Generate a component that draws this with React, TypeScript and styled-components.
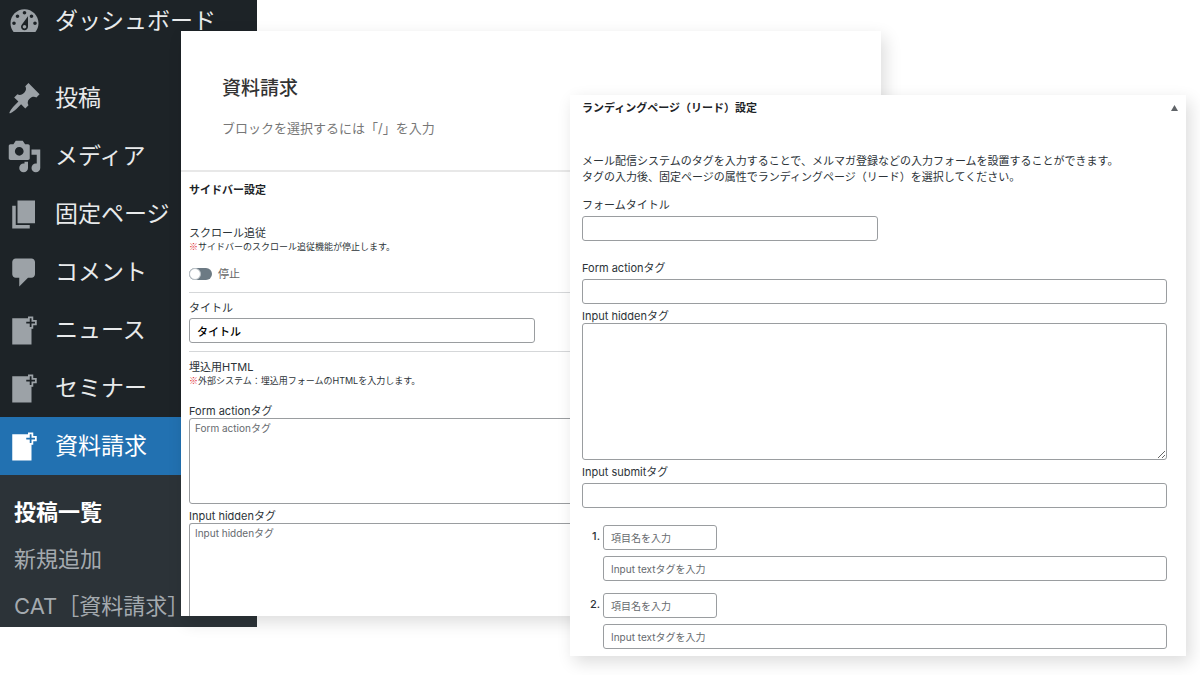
import React from "react";
import styled, { createGlobalStyle, css } from "styled-components";

const GlobalStyle = createGlobalStyle`
  *, *::before, *::after { box-sizing: border-box; }
  body {
    margin: 0;
    background: #fff;
    color: #2c3338;
    font-family: Inter, "Noto Sans CJK JP", sans-serif;
    font-size: 11px;
    line-height: 14px;
  }
  input, textarea, button { font: inherit; color: inherit; }
`;

/* The three panels share one grid row and overlap across its columns. */
const Stage = styled.main`
  display: grid;
  grid-template-columns: 181px 76px minmax(0, 313fr) minmax(0, 311fr) minmax(0, 305fr) 14px;
  align-items: start;
  padding-bottom: 19px;
  overflow: hidden;
`;

const Sidebar = styled.nav`
  grid-area: 1 / 1 / 2 / 3;
  background: #1d2327;
`;

const Menu = styled.ul`
  list-style: none;
  margin: 0;
  padding: 0;
`;

const MenuLink = styled.a<{ $current?: boolean; $first?: boolean }>`
  display: flex;
  align-items: center;
  gap: 13px;
  height: ${(p) => (p.$first ? 42 : 58)}px;
  margin-bottom: ${(p) => (p.$first ? 27 : 0)}px;
  padding-left: 7px;
  background: ${(p) => (p.$current ? "#2271b1" : "transparent")};
  color: ${(p) => (p.$current ? "#fff" : "#e8eaeb")};
  font-size: 23px;
  font-weight: 400;
  line-height: 32px;
  white-space: nowrap;
  text-decoration: none;

  svg {
    flex: none;
    width: 35px;
    height: 35px;
    fill: ${(p) => (p.$current ? "#fff" : "#9ca2a7")};
  }
`;

const Submenu = styled.ul`
  display: flex;
  flex-direction: column;
  gap: 9px;
  list-style: none;
  margin: 0;
  padding: 18px 0 2px 14px;
  background: #2c3338;
`;

const SubLink = styled.a<{ $current?: boolean }>`
  display: block;
  color: ${(p) => (p.$current ? "#fff" : "#a4aaaf")};
  font-size: 22px;
  font-weight: ${(p) => (p.$current ? 700 : 400)};
  line-height: 38px;
  white-space: nowrap;
  text-decoration: none;
`;

const panel = css`
  background: #fff;
  box-shadow: 4px 6px 16px rgba(0, 0, 0, 0.14);
`;

const EditorPanel = styled.section`
  ${panel}
  grid-area: 1 / 2 / 2 / 5;
  margin-top: 31px;
`;

const EditorHeader = styled.header`
  padding: 45px 41px 32px;
  border-bottom: 2px solid #e8e8e8;
`;

const PageTitle = styled.h1`
  margin: 0;
  color: #333;
  font-size: 19px;
  font-weight: 500;
  line-height: 26px;
`;

const BlockPrompt = styled.p`
  margin: 16px 0 0;
  color: #777;
  font-size: 13px;
  line-height: 20px;
`;

const SettingsBody = styled.div`
  padding: 8px 0 0 8px;
`;

const BoxTitle = styled.h2`
  margin: 0;
  color: #1d2327;
  font-size: 11px;
  font-weight: 700;
  line-height: 20px;
`;

const Group = styled.div<{ $top: number; $bottom?: number; $line?: boolean }>`
  display: flex;
  flex-direction: column;
  align-items: flex-start;
  padding: ${(p) => p.$top}px 0 ${(p) => p.$bottom ?? 0}px;
  border-bottom: ${(p) => (p.$line ? "1px solid #d5d7d9" : "0")};
`;

const FieldLabel = styled.label<{ $gap?: number }>`
  display: block;
  margin-bottom: ${(p) => p.$gap ?? 0}px;
`;

const Caption = styled.p`
  margin: 0;
`;

const Note = styled.p`
  margin: 0;
  font-size: 9px;
  line-height: 13px;
`;

const Mark = styled.span`
  color: #e0262c;
  font-family: "Noto Sans CJK JP", sans-serif;
  line-height: 1;
`;

const SwitchLabel = styled.label`
  display: flex;
  align-items: center;
  gap: 6px;
  height: 16px;
  margin-top: 13px;
  color: #666;
`;

const Switch = styled.input`
  appearance: none;
  display: flex;
  align-items: center;
  width: 23px;
  height: 12px;
  margin: 0;
  border-radius: 6px;
  background: #6c7a84;

  &::before {
    content: "";
    width: 12px;
    height: 12px;
    border: 1px solid #bcc3c8;
    border-radius: 50%;
    background: #fff;
  }
`;

const control = css`
  display: block;
  margin: 0;
  border: 1px solid #9a9da0;
  border-radius: 3px;
  background: #fff;
  outline: 0;

  &::placeholder {
    color: #666a6e;
    font-weight: 400;
    opacity: 1;
  }
`;

const TextInput = styled.input<{ $width?: number }>`
  ${control}
  width: ${(p) => (p.$width ? `${p.$width}px` : "100%")};
  max-width: 100%;
  height: 25px;
  padding: 0 7px;
  color: #000;
  font-weight: 500;

  &::placeholder { font-size: 10px; }
`;

const TextArea = styled.textarea<{ $height: number; $cut?: boolean }>`
  ${control}
  width: 100%;
  height: ${(p) => p.$height}px;
  padding: 2px 5px;
  font-size: 10px;
  ${(p) =>
    p.$cut &&
    css`
      border-bottom: 0;
      border-radius: 3px 3px 0 0;
    `}
`;

const LeadPanel = styled.section`
  ${panel}
  grid-area: 1 / 4 / 2 / 6;
  margin-top: 95px;
  padding: 0 19px 7px 12px;
`;

const LeadHeader = styled.header`
  display: flex;
  align-items: center;
  justify-content: space-between;
  height: 25px;
  margin-right: -11px;
`;

const CollapseButton = styled.button`
  display: flex;
  padding: 0;
  border: 0;
  background: none;

  svg {
    width: 7px;
    height: 6px;
    fill: #606468;
  }
`;

const Description = styled.p`
  margin: 33px 0 0;
  line-height: 16px;
`;

const Items = styled.ol`
  display: grid;
  gap: 12px;
  list-style: none;
  margin: 17px 0 0;
  padding: 0;
`;

const Item = styled.li`
  display: grid;
  grid-template-columns: 18px minmax(0, 1fr);
  column-gap: 3px;
`;

const ItemNumber = styled.span`
  justify-self: end;
  margin-top: 4px;
  font-weight: 500;
`;

const ItemFields = styled.div`
  display: grid;
  gap: 6px;
`;

const addPage = "M17 7V4h-2V2h-3v1H3v15h11V9h1V7h2zm-1-2v1h-2v2h-1V6h-2V5h2V3h1v2h2z";

const menu = [
  {
    label: "ダッシュボード",
    icon: "M3.76 16h12.48c1.1-1.37 1.76-3.11 1.76-5 0-4.42-3.58-8-8-8s-8 3.58-8 8c0 1.89.66 3.63 1.76 5zM10 4c.55 0 1 .45 1 1s-.45 1-1 1-1-.45-1-1 .45-1 1-1zM6 6c.55 0 1 .45 1 1s-.45 1-1 1-1-.45-1-1 .45-1 1-1zm8 0c.55 0 1 .45 1 1s-.45 1-1 1-1-.45-1-1 .45-1 1-1zm-5.37 5.55L12 7v6c0 1.1-.9 2-2 2s-2-.9-2-2c0-.57.24-1.08.63-1.45zM4 10c.55 0 1 .45 1 1s-.45 1-1 1-1-.45-1-1 .45-1 1-1zm12 0c.55 0 1 .45 1 1s-.45 1-1 1-1-.45-1-1 .45-1 1-1zm-5 3c0-.55-.45-1-1-1s-1 .45-1 1 .45 1 1 1 1-.45 1-1z",
  },
  {
    label: "投稿",
    icon: "M10.44 3.02l1.82-1.82 6.36 6.35-1.83 1.82c-1.05-.68-2.48-.57-3.41.36l-.75.75c-.92.93-1.04 2.35-.35 3.41l-1.83 1.82-2.41-2.41-2.8 2.79c-.42.42-3.38 2.71-3.8 2.29s1.86-3.39 2.28-3.81l2.79-2.79L4.1 9.36l1.83-1.82c1.05.69 2.48.57 3.4-.36l.75-.75c.93-.92 1.05-2.35.36-3.41z",
  },
  {
    label: "メディア",
    icon: "M13 11V4c0-.55-.45-1-1-1h-1.67L9 1H5L3.67 3H2c-.55 0-1 .45-1 1v7c0 .55.45 1 1 1h10c.55 0 1-.45 1-1zM7 4.5c1.38 0 2.5 1.12 2.5 2.5S8.38 9.5 7 9.5 4.5 8.38 4.5 7 5.62 4.5 7 4.5zM14 6h5v10.5c0 1.38-1.12 2.5-2.5 2.5S14 17.88 14 16.5s1.12-2.5 2.5-2.5c.17 0 .34.02.5.05V9h-3V6zm-4 8.05V13h2v3.5c0 1.38-1.12 2.5-2.5 2.5S7 17.88 7 16.5 8.12 14 9.5 14c.17 0 .34.02.5.05z",
  },
  { label: "固定ページ", icon: "M6 15V2h10v13H6zm-1 1h8v2H3V5h2v11z" },
  {
    label: "コメント",
    icon: "M5 2h9c1.1 0 2 .9 2 2v7c0 1.1-.9 2-2 2h-2l-5 5v-5H5c-1.1 0-2-.9-2-2V4c0-1.1.9-2 2-2z",
  },
  { label: "ニュース", icon: addPage },
  { label: "セミナー", icon: addPage },
  { label: "資料請求", icon: addPage, current: true },
];

const submenu = ["投稿一覧", "新規追加", "CAT［資料請求］"];

export default function App() {
  return (
    <>
      <GlobalStyle />
      <Stage>
        <Sidebar aria-label="管理メニュー">
          <Menu>
            {menu.map((item, i) => (
              <li key={item.label}>
                <MenuLink href="#" $current={item.current} $first={i === 0}>
                  <svg viewBox="0 0 20 20" aria-hidden="true">
                    <path fillRule="evenodd" d={item.icon} />
                  </svg>
                  {item.label}
                </MenuLink>
              </li>
            ))}
          </Menu>
          <Submenu>
            {submenu.map((label, i) => (
              <li key={label}>
                <SubLink href="#" $current={i === 0}>
                  {label}
                </SubLink>
              </li>
            ))}
          </Submenu>
        </Sidebar>

        <EditorPanel>
          <EditorHeader>
            <PageTitle>資料請求</PageTitle>
            <BlockPrompt>ブロックを選択するには「/」を入力</BlockPrompt>
          </EditorHeader>
          <SettingsBody>
            <BoxTitle>サイドバー設定</BoxTitle>
            <Group $top={26} $bottom={10} $line>
              <Caption>スクロール追従</Caption>
              <Note>
                <Mark>※</Mark>サイドバーのスクロール追従機能が停止します。
              </Note>
              <SwitchLabel>
                <Switch type="checkbox" role="switch" />
                停止
              </SwitchLabel>
            </Group>
            <Group $top={8} $bottom={8} $line>
              <FieldLabel htmlFor="side-title" $gap={3}>タイトル</FieldLabel>
              <TextInput id="side-title" type="text" defaultValue="タイトル" $width={346} />
            </Group>
            <Group $top={8}>
              <Caption>埋込用HTML</Caption>
              <Note>
                <Mark>※</Mark>外部システム：埋込用フォームのHTMLを入力します。
              </Note>
            </Group>
            <Group $top={17}>
              <FieldLabel htmlFor="side-action">Form actionタグ</FieldLabel>
              <TextArea id="side-action" placeholder="Form actionタグ" $height={86} />
            </Group>
            <Group $top={5}>
              <FieldLabel htmlFor="side-hidden">Input hiddenタグ</FieldLabel>
              <TextArea id="side-hidden" placeholder="Input hiddenタグ" $height={93} $cut />
            </Group>
          </SettingsBody>
        </EditorPanel>

        <LeadPanel>
          <LeadHeader>
            <BoxTitle>ランディングページ（リード）設定</BoxTitle>
            <CollapseButton type="button" aria-label="パネルを閉じる">
              <svg viewBox="0 0 7 6" aria-hidden="true">
                <path d="M3.5 0L7 6H0z" />
              </svg>
            </CollapseButton>
          </LeadHeader>
          <Description>
            メール配信システムのタグを入力することで、メルマガ登録などの入力フォームを設置することができます。
            <br />
            タグの入力後、固定ページの属性でランディングページ（リード）を選択してください。
          </Description>
          <Group $top={13}>
            <FieldLabel htmlFor="lead-title" $gap={4}>フォームタイトル</FieldLabel>
            <TextInput id="lead-title" type="text" $width={296} />
          </Group>
          <Group $top={20}>
            <FieldLabel htmlFor="lead-action" $gap={4}>Form actionタグ</FieldLabel>
            <TextInput id="lead-action" type="text" />
          </Group>
          <Group $top={5}>
            <FieldLabel htmlFor="lead-hidden">Input hiddenタグ</FieldLabel>
            <TextArea id="lead-hidden" $height={137} />
          </Group>
          <Group $top={5}>
            <FieldLabel htmlFor="lead-submit" $gap={4}>Input submitタグ</FieldLabel>
            <TextInput id="lead-submit" type="text" />
          </Group>
          <Items>
            {[1, 2].map((n) => (
              <Item key={n}>
                <ItemNumber>{n}.</ItemNumber>
                <ItemFields>
                  <TextInput type="text" placeholder="項目名を入力" aria-label={`項目名 ${n}`} $width={114} />
                  <TextInput type="text" placeholder="Input textタグを入力" aria-label={`Input textタグ ${n}`} />
                </ItemFields>
              </Item>
            ))}
          </Items>
        </LeadPanel>
      </Stage>
    </>
  );
}
